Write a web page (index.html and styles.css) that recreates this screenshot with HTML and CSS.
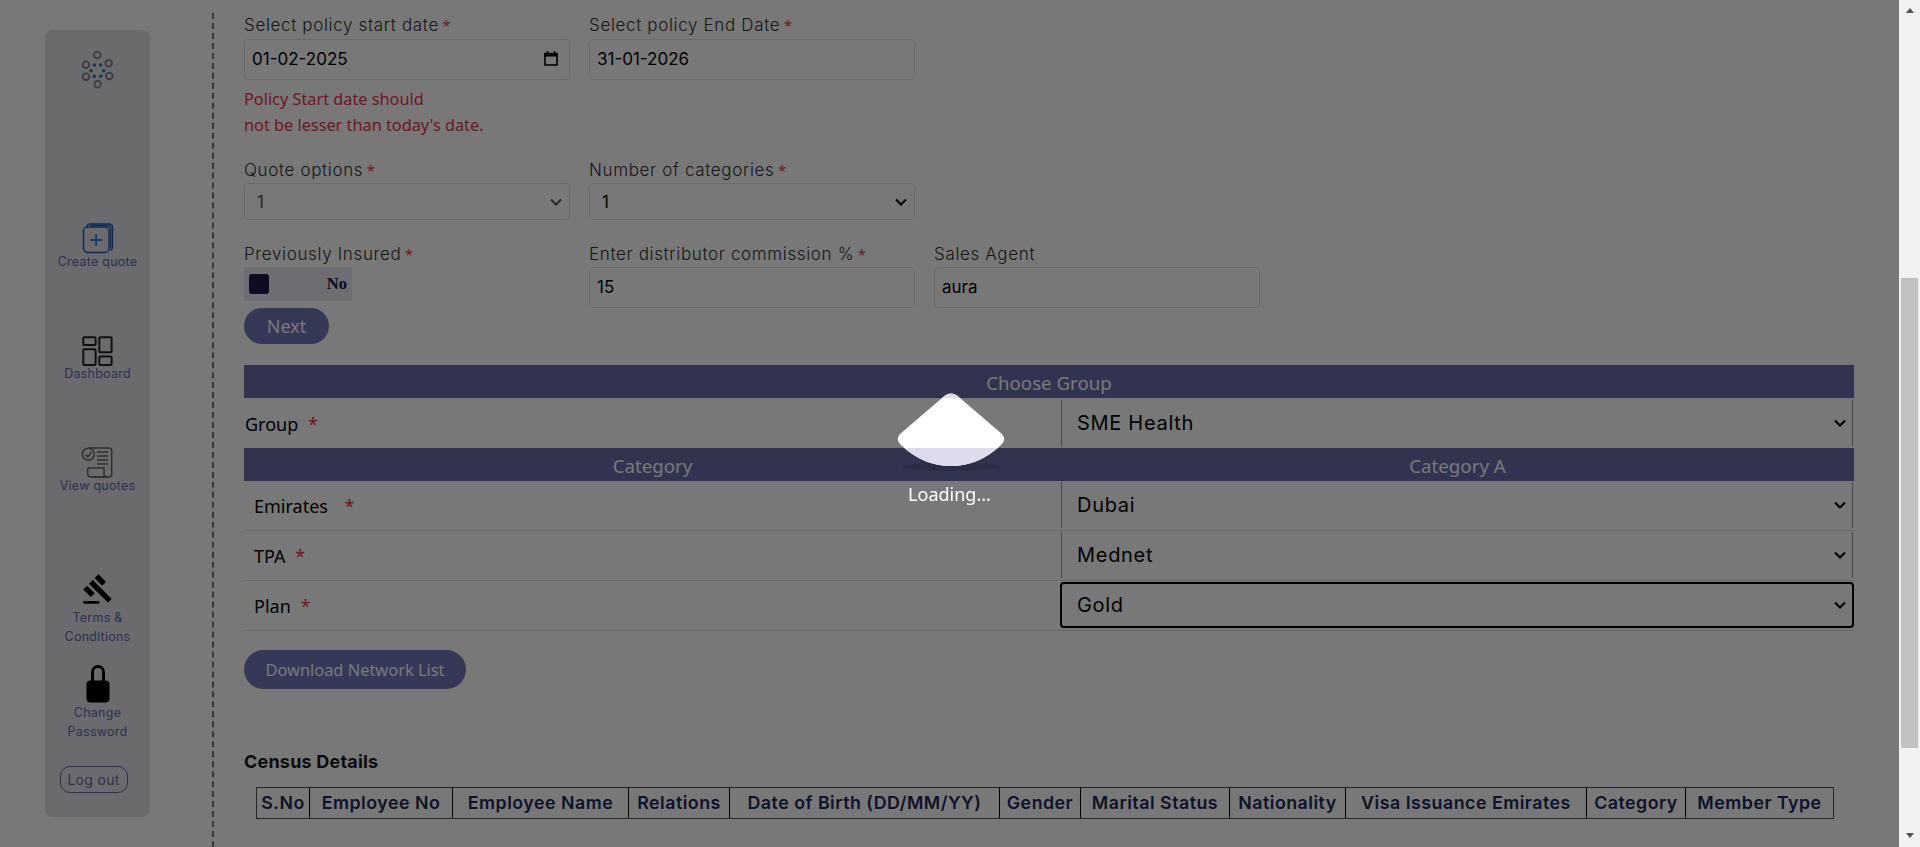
FILE: index.html
```html
<!DOCTYPE html>
<html lang="en">
<head>
    <meta charset="UTF-8">
    <meta name="viewport" content="width=device-width, initial-scale=1.0">
    <title>Create quote</title>
    <link rel="stylesheet" href="styles.css">
</head>
<body>
    <div class="page">
        <!-- side menu -->
        <aside class="side">
            <div class="side-card">
                <svg class="logo" width="36" height="42" viewBox="80 48 36 42">
                    <g fill="none" stroke="#808080" stroke-width="1.8">
                        <circle cx="97.3" cy="54" r="3.3"/>
                        <circle cx="108.7" cy="62.3" r="3.3"/>
                        <circle cx="109.3" cy="75" r="3.3"/>
                        <circle cx="97.7" cy="83.3" r="3.3"/>
                        <circle cx="86" cy="75.7" r="3.3"/>
                        <circle cx="86" cy="63.7" r="3.3"/>
                    </g>
                    <g fill="#2a74b8">
                        <circle cx="94.3" cy="64" r="1.7"/>
                        <circle cx="100.7" cy="64" r="1.7"/>
                        <circle cx="103.7" cy="69.7" r="1.7"/>
                        <circle cx="100.7" cy="75.3" r="1.7"/>
                        <circle cx="94.3" cy="75.3" r="1.7"/>
                        <circle cx="91" cy="69.7" r="1.7"/>
                    </g>
                </svg>
                <a class="side-item item-create" href="#">
                    <svg width="32" height="31" viewBox="0 0 32 31">
                        <g fill="none" stroke="#1c5cb0" stroke-width="1.4">
                            <rect x="1.5" y="4" width="25.5" height="25.5" rx="4"/>
                            <path d="M5 3.5 Q5.5 1 8 1 H27 Q30.5 1 30.5 4.5 V24 Q30.5 26.5 28 27"/>
                            <path d="M8 2.5 H25 Q28.7 2.5 28.7 6 V25"/>
                        </g>
                        <path d="M14.2 11 V23 M8.2 17 H20.2" stroke="#3f7cc8" stroke-width="2" fill="none"/>
                    </svg>
                    <span>Create quote</span>
                </a>
                <a class="side-item item-dash" href="#">
                    <svg width="31" height="30" viewBox="0 0 31 30">
                        <g fill="none" stroke="#222" stroke-width="2">
                            <rect x="1.3" y="1.3" width="12.3" height="7.7" rx="1"/>
                            <rect x="17.3" y="1.3" width="12.3" height="15" rx="1"/>
                            <rect x="1.3" y="13.3" width="12.3" height="15.7" rx="1"/>
                            <rect x="17.3" y="20.6" width="12.3" height="8.3" rx="1"/>
                        </g>
                    </svg>
                    <span>Dashboard</span>
                </a>
                <a class="side-item item-view" href="#">
                    <svg width="32" height="31" viewBox="0 0 32 31">
                        <g fill="none" stroke="#666" stroke-width="1.5">
                            <circle cx="7.3" cy="7.3" r="6"/>
                            <path d="M4.5 7.5 L6.8 9.8 L10.5 5"/>
                            <path d="M7 1 H27 Q30.7 1 30.7 3 V27 Q30.7 30 27 30 H11"/>
                            <path d="M6.7 21 H23 V27 Q23 30 26.5 30 M6.7 21 V27 Q6.7 30 11 30 H26.5"/>
                            <path d="M16 5 H27 M16 9 H27 M16 13 H27 M16 17 H27"/>
                        </g>
                    </svg>
                    <span>View quotes</span>
                </a>
                <a class="side-item item-terms" href="#">
                    <svg width="32" height="32" viewBox="0 0 24 24">
                        <path d="M1 21h12v2H1v-2zM5.245 8.07l2.83-2.827 14.14 14.142-2.828 2.828L5.245 8.07zM12.317 1l5.657 5.656-2.83 2.83-5.654-5.66L12.317 1zM3.825 9.485l5.657 5.657-2.828 2.828-5.657-5.657 2.828-2.828z"/>
                    </svg>
                    <span>Terms &amp; Conditions</span>
                </a>
                <a class="side-item item-lock" href="#">
                    <svg width="24" height="38" viewBox="0 0 24 38">
                        <path d="M6.5 18 V7 A5.5 5.5 0 0 1 17.5 7 V18" fill="none" stroke="#000" stroke-width="3"/>
                        <rect x="0.5" y="15.5" width="23" height="22" rx="4"/>
                    </svg>
                    <span>Change Password</span>
                </a>
                <button class="logout">Log out</button>
            </div>
        </aside>

        <main class="content">
            <div class="form-row row-dates">
                <div class="form-col">
                    <label>Select policy start date <i>*</i></label>
                    <div class="input-box">
                        <span>01-02-2025</span>
                        <svg width="14" height="15" viewBox="0 0 14 15">
                            <path d="M1 2.5 H13 V14 H1 Z" fill="none" stroke="#000" stroke-width="1.6"/>
                            <path d="M0.5 2 H13.5 V5.5 H0.5 Z"/>
                            <path d="M3.5 0 V3 M10.5 0 V3" stroke="#000" stroke-width="1.6"/>
                        </svg>
                    </div>
                    <p class="error">Policy Start date should<br>not be lesser than today's date.</p>
                </div>
                <div class="form-col">
                    <label>Select policy End Date <i>*</i></label>
                    <input type="text" value="31-01-2026">
                </div>
            </div>

            <div class="form-row row-options">
                <div class="form-col">
                    <label>Quote options <i>*</i></label>
                    <select class="muted"><option>1</option></select>
                </div>
                <div class="form-col">
                    <label>Number of categories <i>*</i></label>
                    <select><option>1</option></select>
                </div>
            </div>

            <div class="form-row row-insured">
                <div class="form-col">
                    <label>Previously Insured <i>*</i></label>
                    <div class="toggle"><span class="knob"></span><b>No</b></div>
                </div>
                <div class="form-col">
                    <label>Enter distributor commission % <i>*</i></label>
                    <input type="text" value="15">
                </div>
                <div class="form-col">
                    <label>Sales Agent</label>
                    <input type="text" value="aura">
                </div>
            </div>
            <button class="btn btn-next">Next</button>

            <table class="plan-table">
                <colgroup>
                    <col class="col-name">
                    <col class="col-value">
                </colgroup>
                <tr><th colspan="2">Choose Group</th></tr>
                <tr class="row-group">
                    <td class="name-flush">Group <i>*</i></td>
                    <td><select><option>SME Health</option></select></td>
                </tr>
                <tr><th>Category</th><th>Category A</th></tr>
                <tr>
                    <td>Emirates <i class="far">*</i></td>
                    <td><select><option>Dubai</option></select></td>
                </tr>
                <tr class="row-tall">
                    <td>TPA <i>*</i></td>
                    <td><select><option>Mednet</option></select></td>
                </tr>
                <tr class="row-tall">
                    <td>Plan <i>*</i></td>
                    <td><select class="focused"><option>Gold</option></select></td>
                </tr>
            </table>

            <button class="btn btn-download">Download Network List</button>

            <h4 class="census-title">Census Details</h4>
            <table class="census">
                <tr>
                    <th>S.No</th>
                    <th>Employee No</th>
                    <th>Employee Name</th>
                    <th>Relations</th>
                    <th>Date of Birth (DD/MM/YY)</th>
                    <th>Gender</th>
                    <th>Marital Status</th>
                    <th>Nationality</th>
                    <th>Visa Issuance Emirates</th>
                    <th>Category</th>
                    <th>Member Type</th>
                </tr>
            </table>
        </main>

        <div class="scrollbar">
            <span class="arrow-up"></span>
            <span class="thumb"></span>
            <span class="arrow-down"></span>
        </div>
    </div>

    <!-- loading overlay -->
    <div class="overlay">
        <svg class="drop" width="108" height="80" viewBox="0 0 108 80">
            <defs>
                <clipPath id="drop-shape">
                    <path d="M48 2.5 Q54 -1.5 60 2.5 L105 41 Q110 47 104 52 Q82 73 54 73 Q26 73 4 52 Q-2 47 3 41 Z"/>
                </clipPath>
            </defs>
            <ellipse cx="54" cy="74" rx="49" ry="4" fill="#000" opacity="0.14"/>
            <path d="M48 2.5 Q54 -1.5 60 2.5 L105 41 Q110 47 104 52 Q82 73 54 73 Q26 73 4 52 Q-2 47 3 41 Z" fill="#fff"/>
            <g clip-path="url(#drop-shape)" fill="#dcdcec">
                <rect x="0" y="0" width="108" height="5"/>
                <rect x="0" y="55" width="108" height="25"/>
            </g>
        </svg>
        <div class="loading-text">Loading...</div>
    </div>
</body>
</html>
```

FILE: styles.css
```css
html, body {
    margin: 0;
    height: 847px;
    overflow: hidden;
}
body {
    background-color: #fff;
    font-family: "Inter", "Noto Sans", sans-serif;
    color: #000;
}
.page {
    display: flex;
    height: 847px;
}

/* side menu */
.side {
    width: 212px;
    height: 834px;
    margin-top: 13px;
    border-right: 2px dashed #777;
    flex-shrink: 0;
}
.side-card {
    width: 105px;
    height: 787px;
    margin: 17px 0 0 45px;
    padding-top: 19px;
    box-sizing: border-box;
    background-color: #e4e4ea;
    border-radius: 8px;
    display: flex;
    flex-direction: column;
    align-items: center;
}
.logo {
    display: block;
}
.side-item {
    display: flex;
    flex-direction: column;
    align-items: center;
    color: #6266aa;
    font-size: 12.5px;
    line-height: 16px;
    letter-spacing: 0.25px;
    text-align: center;
    text-decoration: none;
}
.side-item svg {
    display: block;
}
.item-create {
    margin-top: 132px;
}
.item-dash {
    margin-top: 66px;
}
.item-view {
    margin-top: 65px;
}
.item-terms {
    margin-top: 79px;
    line-height: 19px;
    width: 80px;
}
.item-terms span {
    margin-top: 3px;
}
.item-lock {
    margin-top: 19px;
    line-height: 19px;
    width: 80px;
}
.logout {
    margin-top: 25px;
    margin-right: 8px;
    width: 68px;
    height: 27px;
    padding: 0;
    background: none;
    border: 1px solid #6266aa;
    border-radius: 10px;
    color: #6266aa;
    font: 14px "Inter", sans-serif;
    letter-spacing: 0.3px;
}

/* form */
.content {
    flex: 1;
    padding: 13px 45px 0 30px;
    min-width: 0;
}
.form-row {
    display: flex;
    gap: 19px;
}
.row-options {
    margin-top: 20px;
}
.row-insured {
    margin-top: 22px;
}
.form-col {
    width: 326px;
}
label {
    display: block;
    height: 24px;
    line-height: 24px;
    margin-bottom: 1px;
    font-size: 17px;
    font-weight: 300;
    letter-spacing: 0.65px;
    color: #333;
}
.row-dates label {
    margin-bottom: 2px;
}
i {
    font-style: normal;
    color: #e8344a;
    font-family: "Noto Sans", sans-serif;
}
label i {
    font-size: 15px;
    font-weight: 400;
    margin-left: -2px;
}
input, .input-box {
    display: flex;
    align-items: center;
    justify-content: space-between;
    width: 100%;
    height: 41px;
    box-sizing: border-box;
    padding: 0 11px 2px 7px;
    background: none;
    border: 1px solid #dee2e6;
    border-radius: 4px;
    font: 17px "Inter", sans-serif;
    color: #000;
}
select {
    appearance: none;
    background: url("data:image/svg+xml,%3Csvg xmlns='http://www.w3.org/2000/svg' width='12' height='8'%3E%3Cpath d='M1 1.5 L6 6.5 L11 1.5' fill='none' stroke='%23000' stroke-width='2'/%3E%3C/svg%3E") no-repeat right 7px center;
}
.form-col select {
    display: block;
    width: 100%;
    height: 37px;
    padding: 0 24px 0 12px;
    border: 1px solid #dee2e6;
    border-radius: 4px;
    font: 17px "Inter", sans-serif;
    color: #000;
}
.form-col select.muted {
    color: #555;
    background-image: url("data:image/svg+xml,%3Csvg xmlns='http://www.w3.org/2000/svg' width='12' height='8'%3E%3Cpath d='M1 1.5 L6 6.5 L11 1.5' fill='none' stroke='%23555' stroke-width='2'/%3E%3C/svg%3E");
}
.error {
    margin: 6px 0 0;
    color: #e8344a;
    font: 16.3px/26px "Noto Sans", sans-serif;
    height: 52px;
}
.toggle {
    width: 108px;
    height: 34px;
    background-color: #e9e7f0;
    display: flex;
    align-items: center;
    justify-content: space-between;
    padding: 0 5px;
    box-sizing: border-box;
}
.knob {
    width: 20px;
    height: 20px;
    border-radius: 3px;
    background-color: #1d1a48;
}
.toggle b {
    font: bold 16.5px "Liberation Serif", serif;
    color: #141448;
}
.btn {
    display: block;
    padding: 0;
    border: none;
    background-color: #7277ba;
    color: #fff;
    font: 18px "Noto Sans", sans-serif;
}
.btn-next {
    width: 85px;
    height: 36px;
    margin-top: 0;
    border-radius: 18px;
}
.btn-download {
    width: 222px;
    height: 39px;
    margin-top: 19px;
    border-radius: 20px;
    font-size: 16.4px;
}

/* group and plan table */
.plan-table {
    width: 1610px;
    margin-top: 21px;
    border-collapse: collapse;
    table-layout: fixed;
}
.col-name {
    width: 817px;
}
.col-value {
    width: 793px;
}
.plan-table th {
    height: 33px;
    padding: 1px 0 0;
    box-sizing: border-box;
    background-color: #6a6fa8;
    color: #fff;
    font: 18.7px "Noto Sans", sans-serif;
}
.plan-table td {
    height: 49px;
    padding: 1px 0 0 10px;
    box-sizing: border-box;
    border-bottom: 1px solid #dee2e6;
    font: 18px "Noto Sans", sans-serif;
}
.plan-table .name-flush {
    padding-left: 1px;
}
.plan-table .row-group td {
    height: 50px;
    border-bottom: none;
}
.plan-table .row-tall td {
    height: 50px;
}
.plan-table td i {
    margin-left: 5px;
}
.plan-table td i.far {
    margin-left: 12px;
}
.plan-table td:last-child {
    padding: 0;
}
.plan-table select {
    display: block;
    width: 792px;
    height: 46px;
    padding: 0 24px 0 15px;
    border: none;
    border-left: 1px solid #999;
    border-right: 1px solid #999;
    background-position: right 6px center;
    font: 20px "Inter", sans-serif;
    letter-spacing: 0.7px;
    color: #000;
}
.plan-table select.focused {
    width: 794px;
    margin-left: -1px;
    padding-left: 15px;
    border: 2px solid #000;
    border-radius: 4px;
}

/* census table */
.census-title {
    margin: 61px 0 0;
    height: 24px;
    line-height: 24px;
    font-size: 18px;
    font-weight: 700;
    letter-spacing: 0.2px;
    color: #1c1c1c;
}
.census {
    width: 1578px;
    margin: 13px 0 0 12px;
    border-collapse: collapse;
    table-layout: fixed;
}
.census th {
    height: 30px;
    padding: 0;
    border: 1px solid #000;
    border-top-color: #555;
    border-bottom-color: #555;
    font-size: 17.8px;
    font-weight: 600;
    letter-spacing: 0.5px;
    color: #1f2a58;
    white-space: nowrap;
}
.census th:first-child { width: 52px; border-left-color: #555; }
.census th:nth-child(2) { width: 142px; }
.census th:nth-child(3) { width: 175px; }
.census th:nth-child(4) { width: 100px; }
.census th:nth-child(5) { width: 269px; }
.census th:nth-child(6) { width: 80px; }
.census th:nth-child(7) { width: 148px; }
.census th:nth-child(8) { width: 115px; }
.census th:nth-child(9) { width: 240px; }
.census th:nth-child(10) { width: 98px; }
.census th:last-child { border-right-color: #555; }

/* scrollbar */
.scrollbar {
    width: 21px;
    height: 847px;
    flex-shrink: 0;
    background-color: #f1f1f1;
    display: flex;
    flex-direction: column;
    align-items: center;
    position: relative;
    z-index: 2;
}
.arrow-up, .arrow-down {
    width: 0;
    height: 0;
    border-left: 4.5px solid transparent;
    border-right: 4.5px solid transparent;
}
.arrow-up {
    margin-top: 8px;
    border-bottom: 5px solid #505050;
}
.arrow-down {
    margin-bottom: 9px;
    border-top: 5px solid #505050;
}
.thumb {
    width: 17px;
    height: 470px;
    margin-top: 265px;
    margin-bottom: auto;
    background-color: #c1c1c1;
}

/* overlay */
.overlay {
    position: fixed;
    top: 0;
    left: 0;
    right: 21px;
    bottom: 0;
    padding-top: 393px;
    box-sizing: border-box;
    background-color: rgba(0, 0, 0, 0.53);
    display: flex;
    flex-direction: column;
    align-items: center;
}
.drop {
    display: block;
    margin-left: 3px;
}
.loading-text {
    margin-top: 9px;
    color: #fff;
    font: 18px/24px "Noto Sans", sans-serif;
}
```
